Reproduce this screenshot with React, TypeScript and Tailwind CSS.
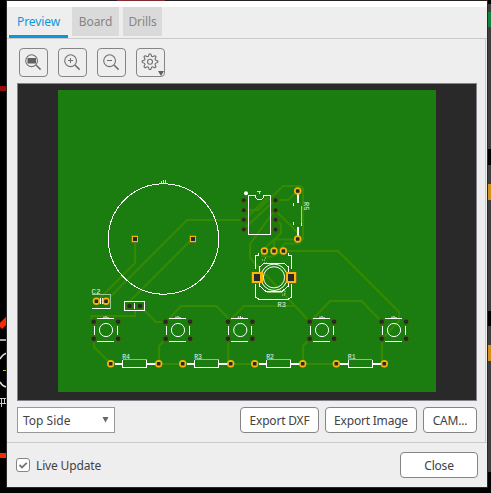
import React from 'react';

const TRACES = [
  'M135 239V263L97 301',
  'M106 301L187 220H244',
  'M192 239L130 301V306',
  'M135 311V316H91.5V319L94 322',
  'M140 306L156 322H166L181 306H216.5L229 319',
  'M228 322L244 306H294',
  'M94 339V347L111 364',
  'M166 339L159 346V364H183',
  'M228.3 339V362M231 364H255',
  'M310 339L303 346V364H336',
  'M382 339V362',
  'M244 210H258L283 186H300.5L303 188.5V239L299 243.5H285L279 250',
  'M274 251V239.5H297',
  'M275 210L298 233V239',
  'M275 200H288L298 191',
  'M244 229L275 200',
  'M275 210L250 244V258L310 322L330 301H361.7L382 322',
  'M244 220L268 197',
  'M275 220L281 224V233L262 251V256L270 257L283 251H338L399 312V321L383 338',
];

const SWITCHES = [106, 178, 240.3, 322, 394];

const RESISTORS = [
  { x: 110.7, name: 'R4' },
  { x: 182.7, name: 'R3' },
  { x: 254.7, name: 'R2' },
  { x: 336.3, name: 'R1' },
];

function Label({ x, y, size = 7, children }: { x: number; y: number; size?: number; children: string }) {
  return (
    <text x={x} y={y} fontSize={size} fill="#e8f2e6" fontFamily="Liberation Mono, monospace">
      {children}
    </text>
  );
}

function Pad({ x, y }: { x: number; y: number }) {
  return (
    <g>
      <circle cx={x} cy={y} r="3.7" fill="#fcb50c" />
      <rect x={x - 1.8} y={y - 1.8} width="3.6" height="3.6" rx="0.5" fill="#292929" />
    </g>
  );
}

function Via({ x, y, r = 2.3 }: { x: number; y: number; r?: number }) {
  return (
    <g>
      <circle cx={x} cy={y} r="3.6" fill="#2f7306" />
      <circle cx={x} cy={y} r={r} fill="#292929" />
    </g>
  );
}

function Switch({ x }: { x: number }) {
  return (
    <g>
      {[-12.3, 12.1].map((dx) => [321.8, 338.8].map((y) => <Via key={`${dx}${y}`} x={x + dx} y={y} />))}
      <g fill="none" stroke="#fff" shapeRendering="crispEdges">
        <path d={`M${x - 9} 318.5h17M${x - 9} 341.5h17M${x - 11.5} 326v9M${x + 11.5} 326v9`} />
      </g>
      <circle cx={x} cy="330" r="6.6" fill="none" stroke="#fff" strokeWidth="1" />
      <path d={`M${x - 2} 318v-1.5M${x} 318v-2M${x + 2} 318v-1`} stroke="#fff" />
    </g>
  );
}

function Resistor({ x, name }: { x: number; name: string }) {
  return (
    <g>
      <g shapeRendering="crispEdges" stroke="#fff" fill="none">
        <path d={`M${x + 4} 364h8M${x + 36} 364h9`} strokeWidth="2" />
        <path d={`M${x + 12} 359.5v8h24v-8`} />
        <path d={`M${x + 12} 359.5h24`} stroke="#8abf83" />
      </g>
      <Pad x={x} y={363.8} />
      <Pad x={x + 48} y={363.8} />
      <Label x={x + 11.5} y={358.7} size={6.5}>{name}</Label>
    </g>
  );
}

function BoardPreview() {
  return (
    <svg className="block h-full w-full" viewBox="18 84 458 316">
      <rect x="58" y="90" width="378" height="302" fill="#1b7d10" />
      <g fill="none" stroke="#358a02" strokeWidth="2.1">
        {TRACES.map((d) => <path key={d} d={d} />)}
      </g>

      <circle cx="163.5" cy="239" r="55.2" fill="none" stroke="#fff" shapeRendering="crispEdges" />
      <path d="M161.5 183v-2M163.5 183v-3M165.5 183v-3" stroke="#fff" strokeWidth="0.8" />
      {[134.5, 192.5].map((x) => (
        <g key={x} shapeRendering="crispEdges">
          <rect x={x - 3.5} y="235" width="7" height="8" fill="#777217" />
          <rect x={x - 2.5} y="236" width="6" height="6" fill="#fcb50c" />
          <rect x={x - 1.5} y="237" width="4" height="4" fill="#292929" />
        </g>
      ))}

      <Label x={91.5} y={294} size={7.5}>C2</Label>
      <path d="M92 308.5h18" stroke="#fff" shapeRendering="crispEdges" />
      <path d="M92 294.5h18.5v14" fill="none" stroke="#9bc995" shapeRendering="crispEdges" />
      <path d="M100.5 298v6M102.5 298v6" stroke="#fff" shapeRendering="crispEdges" />
      <Pad x={96.4} y={301.3} />
      <Pad x={106} y={301.3} />

      <rect x="124.5" y="301.5" width="20" height="9" fill="none" stroke="#fff" shapeRendering="crispEdges" />
      <path d="M134.5 303v6" stroke="#fff" shapeRendering="crispEdges" />
      <Via x={129.5} y={306} />
      <Via x={140} y={306} />

      {[200.3, 210.3, 219.7, 229.4].map((y, i) => (
        <g key={y}>
          <Via x={243.8} y={y} r={2} />
          <Via x={275.5} y={y} r={2} />
          {i === 0 && <rect x="274" y="199" width="3" height="3" fill="#292929" />}
        </g>
      ))}
      <path d="M248.5 195.5h7v2l2 2h4l2-2v-2h7v39h-22z" fill="none" stroke="#fff" shapeRendering="crispEdges" />
      <circle cx="246" cy="193.3" r="2" fill="#fff" />
      <path d="M257 191.5h4M259.5 192v2" stroke="#fff" strokeWidth="0.8" />

      <path d="M298 194v9M298 227v9" stroke="#fff" strokeWidth="2" shapeRendering="crispEdges" />
      <path d="M293.5 203v3M293.5 222v3M301.5 222v4" stroke="#fff" shapeRendering="crispEdges" />
      <path d="M301.5 206v17" stroke="#a9cf9e" shapeRendering="crispEdges" />
      <Pad x={297.7} y={191} />
      <Pad x={297.7} y={239} />
      <g transform="rotate(90 303.5 202)"><Label x={303.5} y={202}>R5</Label></g>

      <g fill="none" stroke="#fff" shapeRendering="crispEdges">
        <path d="M255.5 269v-14h3v-2M288.5 253v2h3v14M255.5 284v13l3 2h30l3-2v-13" />
        <path d="M259.5 273v-6l5-4h19l5 4v6M259.5 282v4l6 5h17l6-5v-4" />
        <path d="M266.5 292h15" stroke="#92bd78" />
      </g>
      <circle cx="274" cy="277.3" r="10.6" fill="none" stroke="#fff" strokeWidth="1" />
      <circle cx="274" cy="277.3" r="13.2" fill="none" stroke="#fff" strokeWidth="1" />
      <path d="M262 260h3M264 263h3M265 258h1M280 291l5-1v5h-3" fill="none" stroke="#cee8bd" strokeDasharray="1 1" />
      {[251.5, 285.5].map((x, i) => (
        <g key={x} shapeRendering="crispEdges">
          <rect x={x} y="272" width="11" height="11" fill="#fcb50c" />
          <path d={i ? 'M296.5 272v11' : 'M251.5 272v11'} stroke="#70711b" />
          <rect x={x + 2.5} y="273.5" width="6" height="7.5" fill="#292929" />
        </g>
      ))}
      {[264.4, 274, 283.4].map((x) => <Pad key={x} x={x} y={251} />)}
      <Label x={277.5} y={306.7}>R3</Label>

      {SWITCHES.map((x) => <Switch key={x} x={x} />)}
      {RESISTORS.map((r) => <Resistor key={r.name} {...r} />)}
    </svg>
  );
}

function Backdrop() {
  return (
    <svg className="absolute inset-0" width="491" height="493" viewBox="0 0 491 493" fill="none">
      <rect width="491" height="493" fill="#000" />
      <path d="M7 .5h480" stroke="#272126" />
      <path d="M117 .5h48" stroke="#822b31" />
      <path d="M0 88.5h7" stroke="#980b0b" strokeWidth="5" />
      <path d="M0 327l8-8" stroke="#f52b05" strokeWidth="6" />
      <path d="M0 340h7M7 353q-4 1-7 6M0 382q3 5 7 5" stroke="#ddd" strokeWidth="1.6" />
      <path d="M3 370.5h4" stroke="#9bd50d" />
      <path d="M0 398.5h6M1.5 398v9M4.5 398v6M0 403.5h7" stroke="#ccc" />
      <path d="M0 455.5h7" stroke="#f52b05" strokeWidth="5" />
      <path d="M6.5 0v487.5h481V0" stroke="#29292b" />
      <rect x="488" y="4" width="3" height="468" fill="#3e3e3e" />
      <rect x="488" y="12" width="3" height="15" fill="#16813a" />
      <path d="M488 149h3v16h-3zM488 311h3v15h-3z" fill="#000" />
      <path d="M488 184h3v16h-3zM488 345h3v16h-3z" fill="#d5901d" />
    </svg>
  );
}

function ToolButton({ children }: { children: React.ReactNode }) {
  return (
    <button className="h-[29px] w-[29px] rounded-[4px] border border-[#858585]">
      <svg className="block" width="27" height="27" viewBox="0 0 27 27" fill="none" stroke="#707070">
        {children}
      </svg>
    </button>
  );
}

function Magnifier() {
  return (
    <>
      <circle cx="11.6" cy="11.7" r="5.9" strokeWidth="1.1" />
      <path d="M16 16l4.6 4.6" strokeWidth="1.6" />
    </>
  );
}

const gearPoints = Array.from({ length: 32 }, (_, i) => {
  const a = ((i - 1.5) * Math.PI) / 16 - Math.PI / 2;
  const r = i % 4 === 1 || i % 4 === 2 ? 7.8 : 5.7;
  return `${(13 + Math.cos(a) * r).toFixed(2)},${(12.7 + Math.sin(a) * r).toFixed(2)}`;
}).join(' ');

const BTN = 'h-[26px] rounded-[4px] border border-[#858585] bg-white pt-px whitespace-nowrap tracking-[-0.2px]';

export default function App() {
  return (
    <div className="relative h-[493px] w-[491px] overflow-hidden font-['Noto_Sans',sans-serif] text-[12px] text-[#424246]">
      <Backdrop />
      <div className="relative ml-[7px] flex h-[487px] w-[480px] flex-col pt-px">
        <div className="h-[6px] bg-white" />
        <div className="flex min-h-0 flex-1 flex-col bg-[#eeeeee]">
          <div className="flex h-8 items-start border-b border-[#cacaca] pl-[2px] tracking-[-0.1px]">
            <div className="flex h-[31px] w-[59px] items-center justify-center border-b-[3px] border-[#0b98da] pt-px text-[#0b98da]">Preview</div>
            <div className="ml-1 flex h-[29px] w-[47px] items-center justify-center bg-[#dadada] pt-px text-[#858585]">Board</div>
            <div className="ml-1 flex h-[29px] w-[39px] items-center justify-center bg-[#dadada] pt-px text-[#858585]">Drills</div>
          </div>
          <div className="mr-px flex h-[403px] flex-col border-r border-[#cacaca] pr-[8px] pl-[10px]">
            <div className="flex h-[44px] gap-[10px] pt-[9px] pl-[2px]">
              <ToolButton>
                <Magnifier />
                <rect x="7.5" y="9" width="8.5" height="5.5" fill="#606060" stroke="none" />
              </ToolButton>
              <ToolButton>
                <Magnifier />
                <path d="M9 11.5h5M11.5 9v5" />
              </ToolButton>
              <ToolButton>
                <Magnifier />
                <path d="M9 11.5h5" />
              </ToolButton>
              <ToolButton>
                <polygon points={gearPoints} strokeWidth="1.1" />
                <circle cx="13" cy="12.7" r="2.5" strokeWidth="1.1" />
                <path d="M21 22h6l-3 5z" fill="#606060" stroke="none" />
              </ToolButton>
            </div>
            <div className="h-[318px] w-[460px] border border-[#81838a] bg-[#292929]">
              <BoardPreview />
            </div>
            <div className="mt-[6px] flex w-[460px] items-start">
              <div className="mr-auto flex h-[26px] w-[98px] items-center justify-between border border-[#999] bg-white pr-[5px] pl-[5px]">
                <span className="pt-px">Top Side</span>
                <svg width="7" height="6" viewBox="0 0 7 6"><path d="M.5 0h6l-3 5.5z" fill="#666" /></svg>
              </div>
              <button className={`${BTN} w-[79px]`}>Export DXF</button>
              <button className={`${BTN} ml-[6px] w-[92px]`}>Export Image</button>
              <button className={`${BTN} ml-[6px] w-[54px]`}>CAM...</button>
            </div>
          </div>
          <div className="flex flex-1 items-start justify-between border-t border-[#cacaca] pt-[9px] pr-[9px] pl-[9px]">
            <label className="flex h-[26px] items-center gap-[6px]">
              <span className="h-[14px] w-[14px] rounded-[3px] border border-[#858585] bg-white">
                <svg className="block" width="12" height="12" viewBox="0 0 12 12" fill="none" stroke="#777" strokeWidth="1.8">
                  <path d="M2.5 6l2.5 2.5L9.8 3.8" />
                </svg>
              </span>
              <span className="pt-px tracking-[-0.15px]">Live Update</span>
            </label>
            <button className={`${BTN} w-[78px]`}>Close</button>
          </div>
        </div>
      </div>
    </div>
  );
}
